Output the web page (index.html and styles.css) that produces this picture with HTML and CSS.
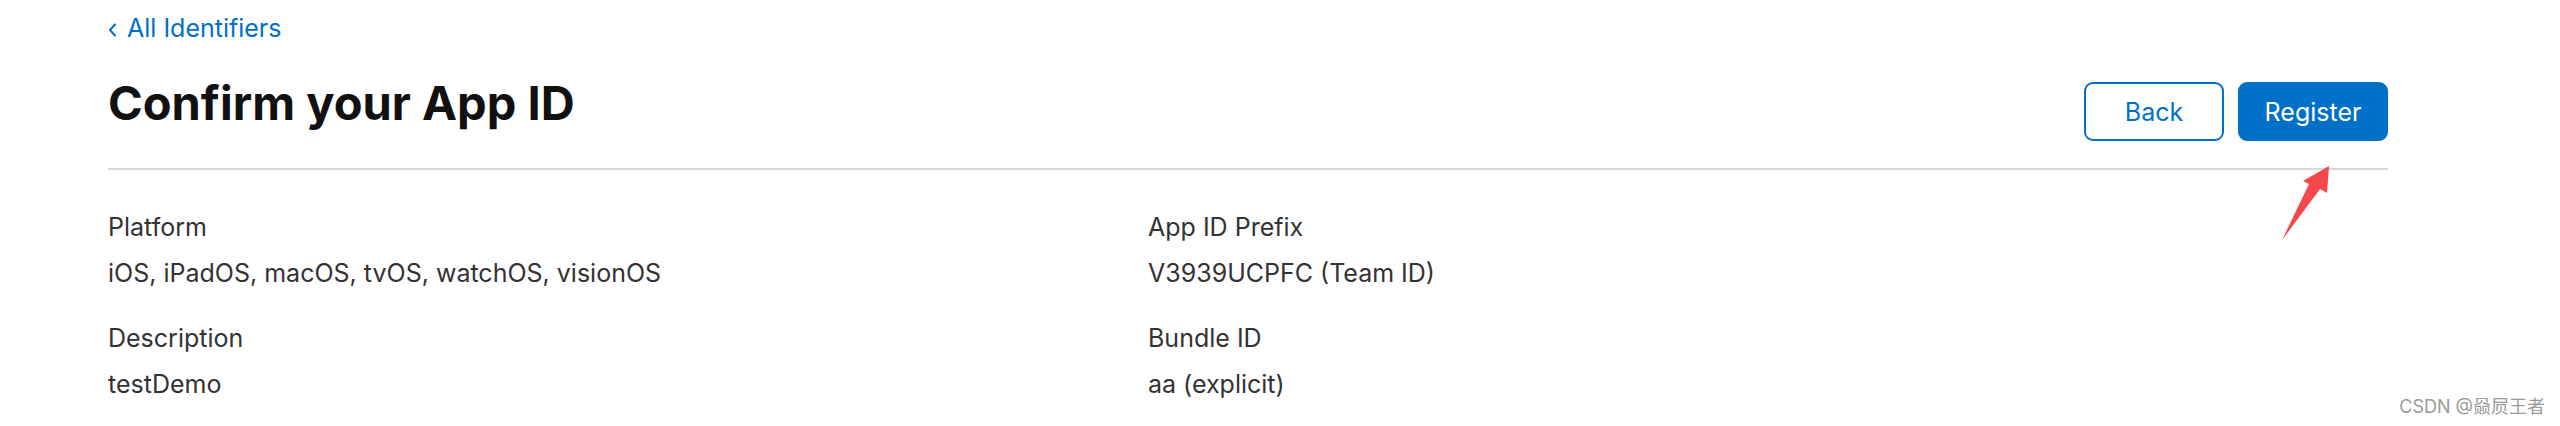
FILE: index.html
```html
<!DOCTYPE html>
<html lang="en">
<head>
<meta charset="utf-8">
<title>Confirm your App ID</title>
<link rel="stylesheet" href="styles.css">
</head>
<body>
<div class="page">
  <a class="back-link" href="#"><svg class="chev" width="9" height="14" viewBox="0 0 9 14"><path d="M7 1.5 L2 7 L7 12.5" fill="none" stroke="currentColor" stroke-width="2" stroke-linecap="round" stroke-linejoin="round"/></svg>All Identifiers</a>
  <div class="header">
    <h1 class="title">Confirm your App ID</h1>
    <div class="actions">
      <button class="btn btn-outline">Back</button>
      <button class="btn btn-primary">Register</button>
    </div>
  </div>
  <div class="details">
    <div class="col col-left">
      <div class="item">
        <div class="label">Platform</div>
        <div class="value">iOS, iPadOS, macOS, tvOS, watchOS, visionOS</div>
      </div>
      <div class="item">
        <div class="label">Description</div>
        <div class="value">testDemo</div>
      </div>
    </div>
    <div class="col">
      <div class="item">
        <div class="label">App ID Prefix</div>
        <div class="value">V3939UCPFC (Team ID)</div>
      </div>
      <div class="item">
        <div class="label">Bundle ID</div>
        <div class="value">aa (explicit)</div>
      </div>
    </div>
  </div>
</div>
<svg class="arrow" width="60" height="90" viewBox="2275 160 60 90"><polygon points="2282,240 2309,184 2303,181 2329,166 2327,193 2320,189" fill="#f4484a"/></svg>
<div class="watermark">CSDN @赑屃王者</div>
</body>
</html>
```
FILE: styles.css
```css
* { box-sizing: border-box; }
html, body { margin: 0; padding: 0; background: #fff; }
body {
  font-family: Inter, "Noto Sans", "Noto Sans CJK SC", sans-serif;
  color: #333;
  width: 2560px;
  height: 426px;
  position: relative;
  overflow: hidden;
}
.page {
  width: 2496px;
  padding: 0 108px;
}
.back-link {
  display: flex;
  align-items: center;
  gap: 10px;
  margin-top: 10px;
  height: 36px;
  font-size: 25px;
  line-height: 36px;
  color: #0070c9;
  text-decoration: none;
}
.chev { margin-top: 4px; }
.header {
  display: flex;
  justify-content: space-between;
  align-items: flex-start;
  margin-top: 29px;
  padding-bottom: 27px;
  border-bottom: 2px solid #d8d8d8;
}
.title {
  margin: 0;
  font-size: 47px;
  line-height: 56px;
  font-weight: 700;
  color: #111;
}
.actions {
  display: flex;
  gap: 14px;
  margin-top: 7px;
}
.btn {
  height: 59px;
  border-radius: 9px;
  font-family: inherit;
  font-size: 25px;
  padding: 0;
  cursor: pointer;
}
.btn-outline {
  width: 140px;
  background: #fff;
  color: #0070c9;
  border: 2px solid #0070c9;
}
.btn-primary {
  width: 150px;
  background: #0070c9;
  color: #fff;
  border: 2px solid #0070c9;
}
.details {
  display: grid;
  grid-template-columns: 1040px 1fr;
  padding-top: 34px;
}
.col {
  display: flex;
  flex-direction: column;
  gap: 19px;
}
.label, .value {
  font-size: 25px;
  line-height: 46px;
  color: #333;
}
.arrow {
  position: absolute;
  left: 2275px;
  top: 160px;
}
.watermark {
  position: absolute;
  right: 15px;
  top: 396px;
  font-size: 18px;
  line-height: 22px;
  color: #9a9a9a;
}
```
